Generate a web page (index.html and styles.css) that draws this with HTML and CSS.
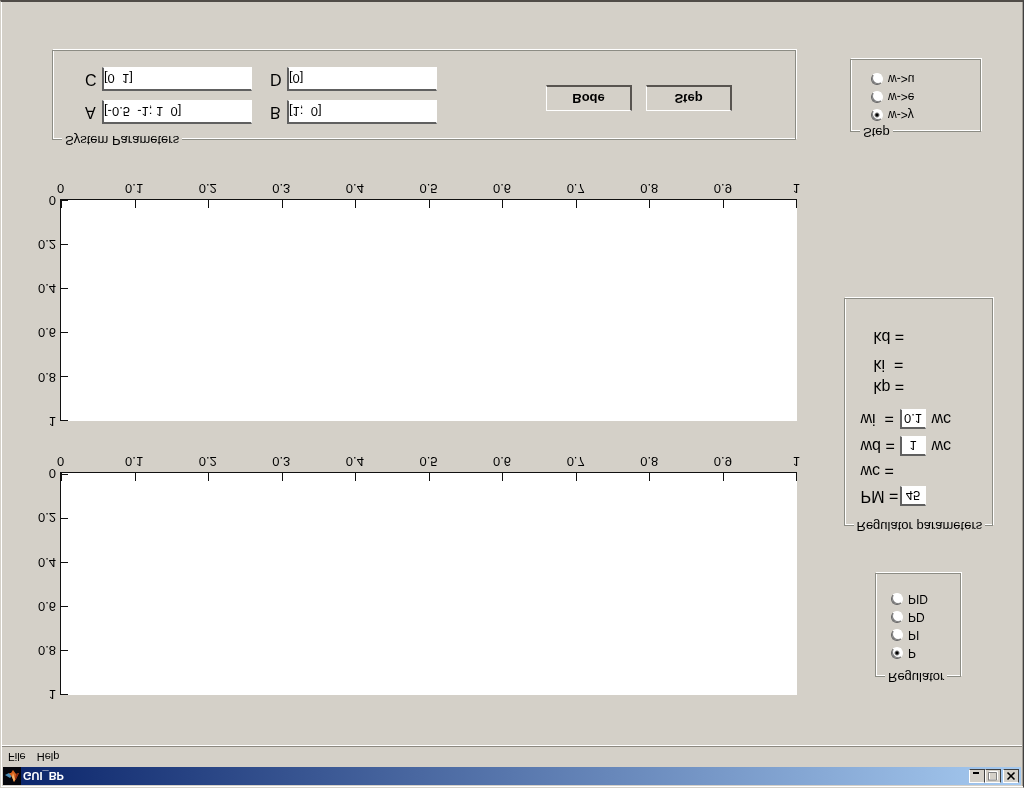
FILE: index.html
```html
<!DOCTYPE html>
<html lang="en">
<head>
<meta charset="utf-8">
<title>GUI_BP</title>
<link rel="stylesheet" href="styles.css">
</head>
<body>
<div class="window">
  <header class="titlebar">
    <svg class="logo" viewBox="0 0 18 18" aria-hidden="true">
      <rect width="18" height="18" fill="#05060c"/>
      <path d="M2 10 L7 7 L9 9 L6 12 Z" fill="#4f8fb8"/>
      <path d="M6 12 L9 8 L11 3 L13 6 L16 12 L13 11 L10 15 L8 12 Z" fill="#d9641e"/>
      <path d="M9 8 L11 3 L12 6 L10 12 Z" fill="#f6b26a"/>
      <path d="M12 6 L13 6 L16 12 L13 11 Z" fill="#8c2a10"/>
    </svg>
    <span class="title">GUI_BP</span>
    <button class="winbtn" aria-label="Minimize"><svg viewBox="0 0 12 10"><path d="M2 8H8" stroke="#000" stroke-width="2"/></svg></button>
    <button class="winbtn" aria-label="Maximize" disabled><svg viewBox="0 0 12 10"><path d="M2.5 1V9.500H10.500V1.500H2" fill="none" stroke="#fff"/><path d="M1.500 1V8.500H9.500V1H1" fill="none" stroke="#808080"/></svg></button>
    <button class="winbtn close" aria-label="Close"><svg viewBox="0 0 12 10"><path d="M2.500 1.500L9.500 8.500M9.500 1.500L2.500 8.500" stroke="#000" stroke-width="1.600"/></svg></button>
  </header>
  <nav class="menu">
    <button>File</button>
    <button>Help</button>
  </nav>

  <main class="content">
    <div class="left">
      <section class="plot">
        <div class="ylabels"><span>1</span><span>0.8</span><span>0.6</span><span>0.4</span><span>0.2</span><span>0</span></div>
        <div class="area">
          <div class="yticks"><i></i><i></i><i></i><i></i><i></i><i></i></div>
          <div class="xticks"><i></i><i></i><i></i><i></i><i></i><i></i><i></i><i></i><i></i><i></i><i></i></div>
        </div>
        <div class="xlabels"><span>0</span><span>0.1</span><span>0.2</span><span>0.3</span><span>0.4</span><span>0.5</span><span>0.6</span><span>0.7</span><span>0.8</span><span>0.9</span><span>1</span></div>
      </section>
      <section class="plot">
        <div class="ylabels"><span>1</span><span>0.8</span><span>0.6</span><span>0.4</span><span>0.2</span><span>0</span></div>
        <div class="area">
          <div class="yticks"><i></i><i></i><i></i><i></i><i></i><i></i></div>
          <div class="xticks"><i></i><i></i><i></i><i></i><i></i><i></i><i></i><i></i><i></i><i></i><i></i></div>
        </div>
        <div class="xlabels"><span>0</span><span>0.1</span><span>0.2</span><span>0.3</span><span>0.4</span><span>0.5</span><span>0.6</span><span>0.7</span><span>0.8</span><span>0.9</span><span>1</span></div>
      </section>
      <fieldset class="panel system">
        <legend>System Parameters</legend>
        <div class="systembody">
          <div class="matrices">
            <div class="field"><label for="a">A</label><input id="a" type="text" value="[-0.5  -1; 1  0]"></div>
            <div class="field"><label for="b">B</label><input id="b" type="text" value="[1;  0]"></div>
            <div class="field"><label for="c">C</label><input id="c" type="text" value="[0  1]"></div>
            <div class="field"><label for="d">D</label><input id="d" type="text" value="[0]"></div>
          </div>
          <div class="actions">
            <button class="push">Bode</button>
            <button class="push">Step</button>
          </div>
        </div>
      </fieldset>
    </div>

    <div class="right">
      <fieldset class="panel regulator">
        <legend>Regulator</legend>
        <div class="options">
          <label><input type="radio" name="reg" checked>P</label>
          <label><input type="radio" name="reg">PI</label>
          <label><input type="radio" name="reg">PD</label>
          <label><input type="radio" name="reg">PID</label>
        </div>
      </fieldset>
      <fieldset class="panel params">
        <legend>Regulator parameters</legend>
        <div class="inputs">
          <div class="row"><label for="pm">PM =</label><input id="pm" type="text" value="45"></div>
          <div class="row"><span>wc =</span></div>
          <div class="row"><label for="wd">wd =</label><input id="wd" type="text" value="1"><span>wc</span></div>
          <div class="row last"><label for="wi">wi  =</label><input id="wi" type="text" value="0.1"><span>wc</span></div>
        </div>
        <div class="gains">
          <div>kp =</div>
          <div>ki  =</div>
          <div class="spaced">kd =</div>
        </div>
      </fieldset>
      <fieldset class="panel step">
        <legend>Step</legend>
        <div class="options">
          <label><input type="radio" name="step" checked>w-&gt;y</label>
          <label><input type="radio" name="step">w-&gt;e</label>
          <label><input type="radio" name="step">w-&gt;u</label>
        </div>
      </fieldset>
    </div>
  </main>
</div>
</body>
</html>
```
FILE: styles.css
```css
* { box-sizing: border-box; }

body {
  margin: 0;
  background: #d4d0c8;
  color: #000;
  font: 13px/16px "Liberation Sans", Arial, sans-serif;
}

button, input { font: inherit; color: inherit; border-radius: 0; margin: 0; }

/* The whole window is mirrored top to bottom. */
.window {
  display: flex;
  flex-direction: column;
  min-height: 100vh;
  padding-top: 1px;
  border: 1px solid #d4d0c8;
  border-right-color: #404040;
  border-bottom: 2px solid #504c48;
  box-shadow: inset 1px 1px #fff, inset -1px 0 #a09c94;
  transform: scaleY(-1);
}

.titlebar {
  display: flex;
  align-items: center;
  height: 18px;
  margin: 1px 2px 0;
  background: linear-gradient(90deg, #0a246a, #a6caf0);
}
.logo { width: 18px; height: 18px; }
.title {
  flex: 1;
  padding-left: 2px;
  color: #fff;
  font-size: 11px;
  font-weight: bold;
}
.winbtn {
  width: 16px;
  height: 14px;
  padding: 0 1px;
  background: #d4d0c8;
  border: 1px solid #fff;
  border-right-color: #404040;
  border-bottom-color: #404040;
}
.winbtn svg { display: block; width: 12px; height: 10px; }
.close { margin: 0 2px 0 2px; }

.menu {
  display: flex;
  gap: 11px;
  height: 21px;
  margin: 0 1px;
  padding: 1px 6px 0;
  border-bottom: 1px solid #8c8880;
  box-shadow: 0 1px #fff;
  font-size: 11px;
}
.menu button {
  height: 18px;
  padding: 0;
  background: none;
  border: 0;
}

.content { display: flex; flex: 1; }

.left {
  display: flex;
  flex: 1;
  flex-direction: column;
  gap: 31px;
  padding: 51px 18px 48px 0;
}

/* Axes */
.plot {
  display: grid;
  flex: 1;
  grid-template-columns: 59px 1fr;
  grid-template-rows: 1fr 20px;
}
.ylabels {
  display: flex;
  flex-direction: column;
  justify-content: space-between;
  align-items: flex-end;
  padding-right: 4px;
}
.ylabels span { height: 1px; display: flex; align-items: center; }
.area {
  display: grid;
  background: #fff;
  border-left: 1px solid #101010;
  border-bottom: 1px solid #101010;
}
.area > div { display: flex; grid-area: 1 / 1; justify-content: space-between; }
.yticks { flex-direction: column; }
.yticks i { width: 7px; height: 1px; background: #101010; }
.xticks { align-items: flex-end; }
.xticks i { width: 1px; height: 8px; background: #101010; }
.xlabels { display: flex; grid-column: 2; justify-content: space-between; padding-top: 3px; }
.xlabels span { width: 1px; display: flex; justify-content: center; }

/* Etched group boxes */
.panel {
  min-width: 0;
  margin: 0;
  padding: 0;
  border: 1px solid #8c8c84;
  box-shadow: inset 1px 1px #fff, 1px 1px #fff;
}
.panel legend {
  margin-left: 9px;
  padding: 0 3px;
  background: #d4d0c8;
}

.system { margin: 0 1px 0 51px; }
.systembody {
  display: flex;
  justify-content: space-between;
  align-items: flex-start;
  padding: 8px 63px 16px 32px;
}
.matrices {
  display: grid;
  grid-template-columns: auto auto;
  gap: 9px 18px;
}
.field { display: flex; align-items: center; gap: 4px; }
.field label { width: 13px; font-size: 16px; }
input[type="text"] {
  background: #fff;
  border: 2px solid #606060;
  border-right: 1px solid #fff;
  border-bottom: 1px solid #fff;
  padding: 0;
  outline: 0;
}
.field input { width: 150px; height: 24px; }
.actions { display: flex; gap: 14px; padding-top: 13px; }
.push {
  width: 86px;
  height: 26px;
  padding: 0;
  background: #d4d0c8;
  border: 1px solid #fff;
  border-right: 2px solid #585450;
  border-bottom: 2px solid #585450;
  font-weight: bold;
}

.right {
  display: flex;
  flex-direction: column;
  align-items: center;
  width: 208px;
  padding: 61px 2px 57px 0;
}
.options { display: flex; flex-direction: column; font-size: 12px; }
.options label { display: flex; align-items: center; gap: 5px; height: 18px; }
.options input {
  appearance: none;
  width: 12px;
  height: 12px;
  background: #fff;
  border: 1px solid #fff;
  border-top-color: #606060;
  border-left-color: #606060;
  border-radius: 50%;
  box-shadow: inset 1px 1px #808080;
}
.options input:checked { background: radial-gradient(circle, #000 1px, #fff 3px); }

.regulator { width: 86px; }
.regulator .options { padding: 7px 0 16px 15px; }

.params { width: 149px; margin-top: 39px; font-size: 16px; }
.params legend { font-size: 13px; }
.inputs { padding: 9px 0 7px 16px; }
.row { display: flex; align-items: center; height: 25px; }
.last { height: 29px; }
.row label { width: 39px; white-space: pre; }
.row input { width: 26px; height: 20px; font-size: 13px; text-align: center; }
.row input + span { padding-left: 6px; }
.gains { padding: 0 0 27px 29px; line-height: 22px; }
.gains div { white-space: pre; }
.spaced { margin-top: 6px; }

.step { width: 131px; margin: auto 5px 0 0; }
.step .options { padding: 0 0 10px 20px; }
```
